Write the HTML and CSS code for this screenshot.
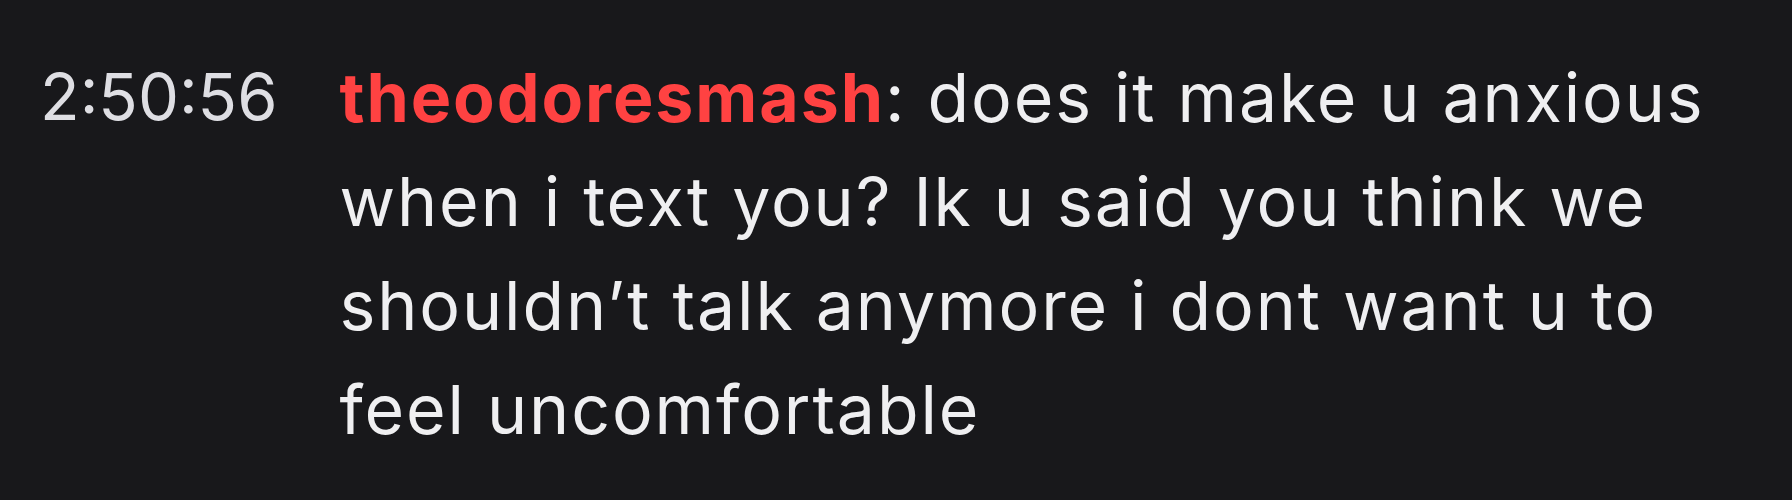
FILE: index.html
```html
<!DOCTYPE html>
<html lang="en">
<head>
    <meta charset="UTF-8">
    <meta name="viewport" content="width=device-width, initial-scale=1.0">
    <title>Chat</title>
    <link rel="stylesheet" href="styles.css">
</head>
<body>
    <div class="chat">
        <div class="line">
            <span class="time">2:50:56</span>
            <p class="message">
                <span class="user">theodoresmash</span>: does it make u anxious when i text you? Ik u said you think we shouldn’t talk anymore i dont want u to feel uncomfortable
            </p>
        </div>
    </div>
</body>
</html>
```

FILE: styles.css
```css
html, body {
    margin: 0;
    padding: 0;
    background-color: #18181b;
}
.chat {
    padding: 45px 30px 0 40px;
    font-family: Inter, "Noto Sans", sans-serif;
    font-size: 68px;
    line-height: 104px;
    letter-spacing: 1.9px;
    color: #efeff1;
}
.line {
    display: flex;
    gap: 62px;
}
.time {
    flex-shrink: 0;
    font-size: 65px;
    letter-spacing: 0;
    color: #dedee3;
}
.message {
    margin: 0;
}
.user {
    color: #ff4242;
    font-weight: 700;
}
```
